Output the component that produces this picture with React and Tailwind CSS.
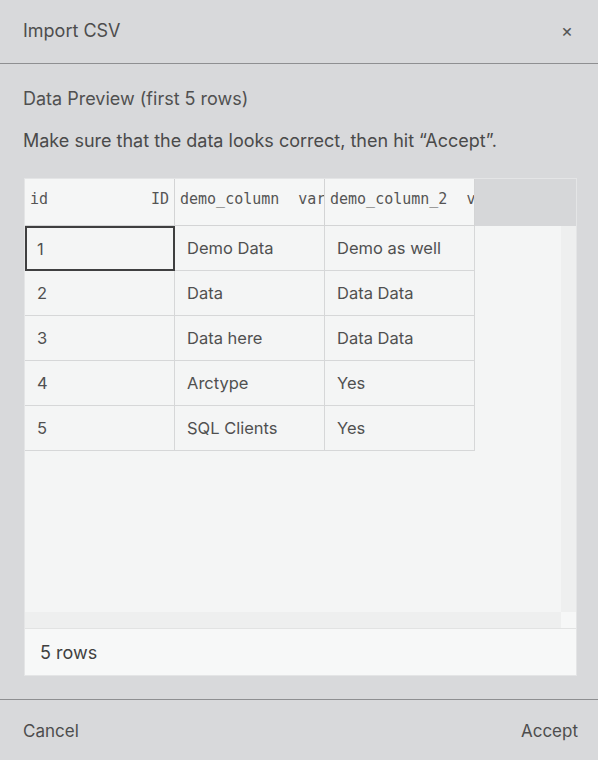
import React from 'react';

const columns = [
    { name: 'demo_column', type: 'var' },
    { name: 'demo_column_2', type: 'v' },
];

const rows = [
    ['1', 'Demo Data', 'Demo as well'],
    ['2', 'Data', 'Data Data'],
    ['3', 'Data here', 'Data Data'],
    ['4', 'Arctype', 'Yes'],
    ['5', 'SQL Clients', 'Yes'],
];

const mono = { fontFamily: '"DejaVu Sans Mono", "Liberation Mono", monospace' };

const App = () => {

    return (

        <div
            className="w-[598px] h-[760px] bg-[#d8d9db] text-[#4a4a4a] flex flex-col overflow-hidden"
            style={{ fontFamily: 'Inter, "Noto Sans", sans-serif' }}
        >

            {/* header */}
            <div className="h-[64px] shrink-0 flex items-center justify-between pl-[23px] pr-[25px] pb-[2px] border-b border-[#8e8f91]">
                <h1 className="text-[18px] text-[#4d4d4d]">
                    Import CSV
                </h1>
                <button className="text-[18px] leading-none text-[#555]">
                    ×
                </button>
            </div>

            {/* body */}
            <div className="flex-1 flex flex-col pl-6 pr-[21px] pt-[24px]">

                <p className="text-[18px] leading-[22px] text-[#505050] -ml-px">
                    Data Preview (first 5 rows)
                </p>

                <p className="text-[18px] leading-[22px] text-[#4a4a4a] mt-[20px] -ml-px">
                    Make sure that the data looks correct, then hit “Accept”.
                </p>

                <div className="mt-[26px] h-[498px] border border-[#e4e5e6] flex flex-col">

                    {/* column headers */}
                    <div className="h-[47px] shrink-0 flex bg-[#d6d7d9]" style={mono}>
                        <div className="w-[150px] flex items-center justify-between px-[5px] pb-[6px] bg-[#f5f6f6] border-r border-b border-[#d3d4d5] text-[15px] text-[#555]">
                            <span>id</span>
                            <span>ID</span>
                        </div>
                        {columns.map((col) => (
                            <div
                                key={col.name}
                                className="w-[150px] flex items-center gap-[19px] pl-[5px] pb-[6px] bg-[#f5f6f6] border-r border-b border-[#d3d4d5] text-[15px] text-[#555] overflow-hidden whitespace-nowrap"
                            >
                                <span>{col.name}</span>
                                <span>{col.type}</span>
                            </div>
                        ))}
                    </div>

                    {/* rows + vertical scrollbar */}
                    <div className="flex-1 min-h-0 flex">
                        <div className="flex-1 bg-[#f4f5f5] flex flex-col text-[#505050]">
                            {rows.map((row, i) => (
                                <div key={row[0]} className="h-[45px] flex">
                                    {row.map((cell, j) => (
                                        <div
                                            key={j}
                                            className={
                                                i === 0 && j === 0
                                                    ? 'w-[150px] flex items-center pl-[10px] pt-px border-2 border-[#3f3f40] text-[16.5px]'
                                                    : 'w-[150px] flex items-center pl-[12px] pt-px border-r border-b border-[#d6d7d8] text-[16.5px]'
                                            }
                                        >
                                            {cell}
                                        </div>
                                    ))}
                                </div>
                            ))}
                        </div>
                        <div className="w-[15px] bg-[#eeefef]" />
                    </div>

                    {/* horizontal scrollbar */}
                    <div className="h-[16px] shrink-0 flex">
                        <div className="flex-1 bg-[#eeefef]" />
                        <div className="w-[15px] bg-[#f6f7f7]" />
                    </div>

                    {/* footer */}
                    <div className="h-[47px] shrink-0 flex items-center pl-[15px] bg-[#f7f8f8] border-t border-[#e2e3e3] text-[18px] text-[#3f3f3f]">
                        5 rows
                    </div>

                </div>

            </div>

            {/* actions */}
            <div className="h-[61px] shrink-0 flex items-center justify-between pl-[23px] pr-[20px] pt-[4px] border-t border-[#8e8f91] text-[17px] text-[#4d4d4d]">
                <button>Cancel</button>
                <button>Accept</button>
            </div>

        </div>

    );

};

export default App;
